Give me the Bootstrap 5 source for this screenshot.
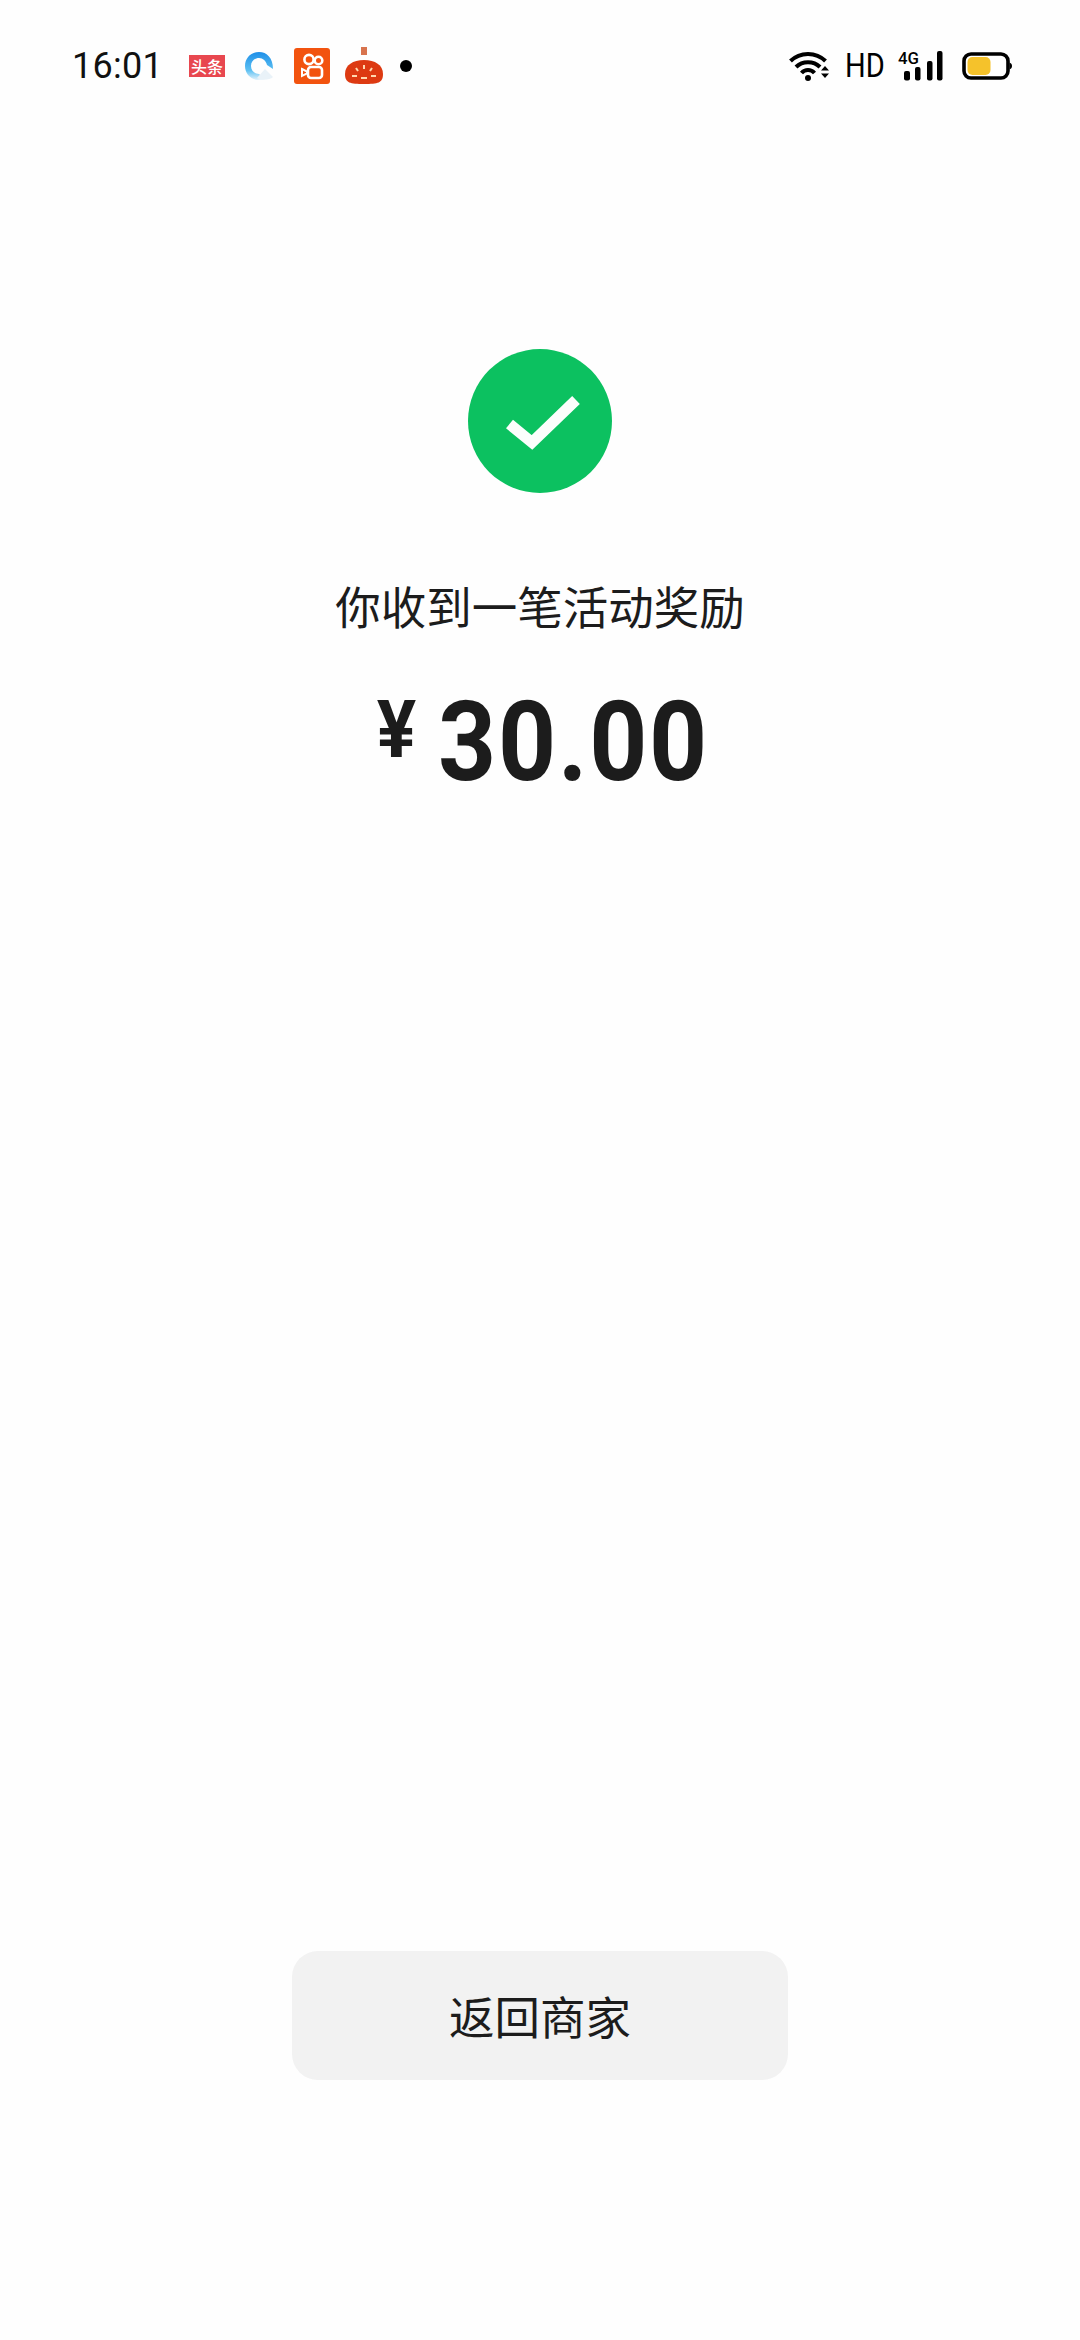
<!DOCTYPE html>
<html lang="zh">
<head>
<meta charset="utf-8">
<title>活动奖励</title>
<link href="https://cdn.jsdelivr.net/npm/bootstrap@5.3.0/dist/css/bootstrap.min.css" rel="stylesheet">
<style>
html,body{background:#fefefe;}
body{font-family:"Roboto","Noto Sans CJK SC",sans-serif;color:#1c1c1c;}
.phone{width:1080px;height:2340px;overflow:hidden;}
.statusline{height:132px;padding:0 68px 0 72px;}
.clock{font-size:36px;line-height:42px;font-weight:400;color:#111;width:85px;letter-spacing:.3px;white-space:nowrap;}
.ic-tt{margin-left:32px;width:36px;height:22px;background:#e8474f;color:#fff;font-family:"Noto Sans CJK SC",sans-serif;font-size:16px;line-height:1;font-weight:500;}
.ic-qq{margin-left:19px;}
.ic-ks{margin-left:20px;}
.ic-rd{margin-left:15px;margin-top:-1px;}
.dotmark{width:12px;height:12px;background:#000;margin-left:17px;}
.hd-label{display:block;width:35px;font-family:"Roboto",sans-serif;font-size:33px;line-height:40px;color:#000;margin:0 18px 0 15px;transform:scaleX(.88);transform-origin:left center;white-space:nowrap;}
.ic-batt{margin-left:19px;}
.hero{padding-top:217px;}
.okmark{width:144px;height:144px;display:block;}
.headline{font-family:"Noto Sans CJK SC",sans-serif;font-size:45.5px;line-height:64px;margin-top:80px;font-weight:400;white-space:nowrap;}
.amount{margin-top:45px;height:120px;font-family:"Roboto",sans-serif;font-weight:700;margin-right:19px;}
.yen{font-size:80px;line-height:80px;width:77px;margin-top:8px;font-weight:700;transform:scaleX(.92);transform-origin:left top;}
.figure{display:block;width:262px;font-size:112px;line-height:120px;letter-spacing:2px;transform:scaleX(.905);transform-origin:left top;white-space:nowrap;}
.backbtn{width:496px;height:129px;background:#f2f2f2;border-radius:26px;border:0;font-family:"Noto Sans CJK SC",sans-serif;font-size:45.5px;color:#1c1c1c;padding:0;font-weight:400;}
.backbtn:hover{background:#f2f2f2;color:#1c1c1c;}
.btnwrap{margin-top:1149px;}
.homebar{width:360px;height:12px;background:#ebebeb;border-radius:5px 5px 0 0;margin-top:260px;}
</style>
</head>
<body class="m-0">
<div class="phone d-flex flex-column">
  <div class="statusline d-flex align-items-center flex-shrink-0">
    <div class="clock">16:01</div>
    <span class="ic-tt d-flex align-items-center justify-content-center">头条</span>
    <svg class="ic-qq" width="30" height="30" viewBox="0 0 30 30"><defs><linearGradient id="q" x1="0" y1="0" x2="0" y2="1"><stop offset="0" stop-color="#1e8fe8"/><stop offset=".65" stop-color="#5cc0f2"/><stop offset="1" stop-color="#e3f2fb"/></linearGradient></defs><path d="M29 18C29 7 23 1 15 1S1 7 1 15c0 7 5 13 12 14l8-1-6-5c-4 0-8-3-8-8s4-8 8-8 7 3 8 7z" fill="url(#q)"/><path d="M13 27l8-9 8 8c-3 3-12 4-16 1z" fill="#e9f2f8"/></svg>
    <svg class="ic-ks" width="36" height="36" viewBox="0 0 36 36"><rect width="36" height="36" rx="3" fill="#f2530f"/><circle cx="15" cy="11.500" r="4.600" fill="none" stroke="#fff" stroke-width="2.600"/><circle cx="24.500" cy="12.500" r="3.800" fill="none" stroke="#fff" stroke-width="2.600"/><rect x="14" y="19" width="14" height="11" rx="3" fill="none" stroke="#fff" stroke-width="2.600"/><path d="M8 21l5 2.500v2L8 28z" fill="none" stroke="#fff" stroke-width="2"/></svg>
    <svg class="ic-rd" width="38" height="37" viewBox="0 0 38 37"><rect x="16" y="0" width="6" height="8" fill="#d8744e"/><path d="M0 27C0 18 8 13 19 13s19 5 19 14c0 9-5 10-19 10S0 36 0 27z" fill="#dd3a12"/><path d="M19 18v4M11 21l2 3M27 21l-2 3M7 29h5M26 29h5M16 31h6" stroke="#ffd9b0" stroke-width="2" fill="none"/></svg>
    <span class="rounded-circle dotmark"></span>
    <div class="ms-auto d-flex align-items-center">
      <svg width="41" height="30" viewBox="0 0 41 30"><path d="M1.500 10C11 0.500 27 0.500 36.500 10M7 16C13.500 9.500 24.500 9.500 31 16M12.500 22C16 18 22 18 25.500 22" fill="none" stroke="#000" stroke-width="4"/><circle cx="19" cy="27" r="3" fill="#000"/><path d="M36 15l4 4.500h-8zM32 22.500h8l-4 4.500z" fill="#000"/></svg>
      <span class="hd-label">HD</span>
      <svg width="45" height="38" viewBox="0 -4 45 38"><text x="0" y="12.500" font-family="Roboto" font-size="17" font-weight="500" fill="#000" textLength="21" lengthAdjust="spacingAndGlyphs">4G</text><rect x="6" y="20" width="6" height="9.500" rx="2" fill="#000"/><rect x="17" y="16" width="5.500" height="13.500" rx="2" fill="#000"/><rect x="29" y="10" width="5.500" height="19.500" rx="2" fill="#000"/><rect x="39" y="0" width="5.500" height="29.500" rx="2" fill="#000"/></svg>
      <svg class="ic-batt" width="50" height="28" viewBox="0 0 50 28"><rect x="2" y="2" width="44" height="24" rx="7" fill="#fff" stroke="#000" stroke-width="3.600"/><rect x="5.500" y="5" width="23" height="18" rx="5" fill="#f5c22b"/><path d="M47.500 10.500c2 1 2.500 2 2.500 3.500s-.5 2.500-2.500 3.500z" fill="#000"/></svg>
    </div>
  </div>
  <div class="hero d-flex flex-column align-items-center text-center flex-shrink-0">
    <svg class="okmark" viewBox="0 0 144 144"><circle cx="72" cy="72" r="72" fill="#0cc160"/><path d="M41.500 75 64 93.500 108 51" fill="none" stroke="#fbfefc" stroke-width="11"/></svg>
    <div class="headline">你收到一笔活动奖励</div>
    <div class="amount d-flex align-items-start">
      <span class="yen">¥</span>
      <span class="figure">30.00</span>
    </div>
    <div class="btnwrap"><button type="button" class="btn backbtn d-block">返回商家</button></div>
    <div class="homebar"></div>
  </div>
</div>
</body>
</html>
